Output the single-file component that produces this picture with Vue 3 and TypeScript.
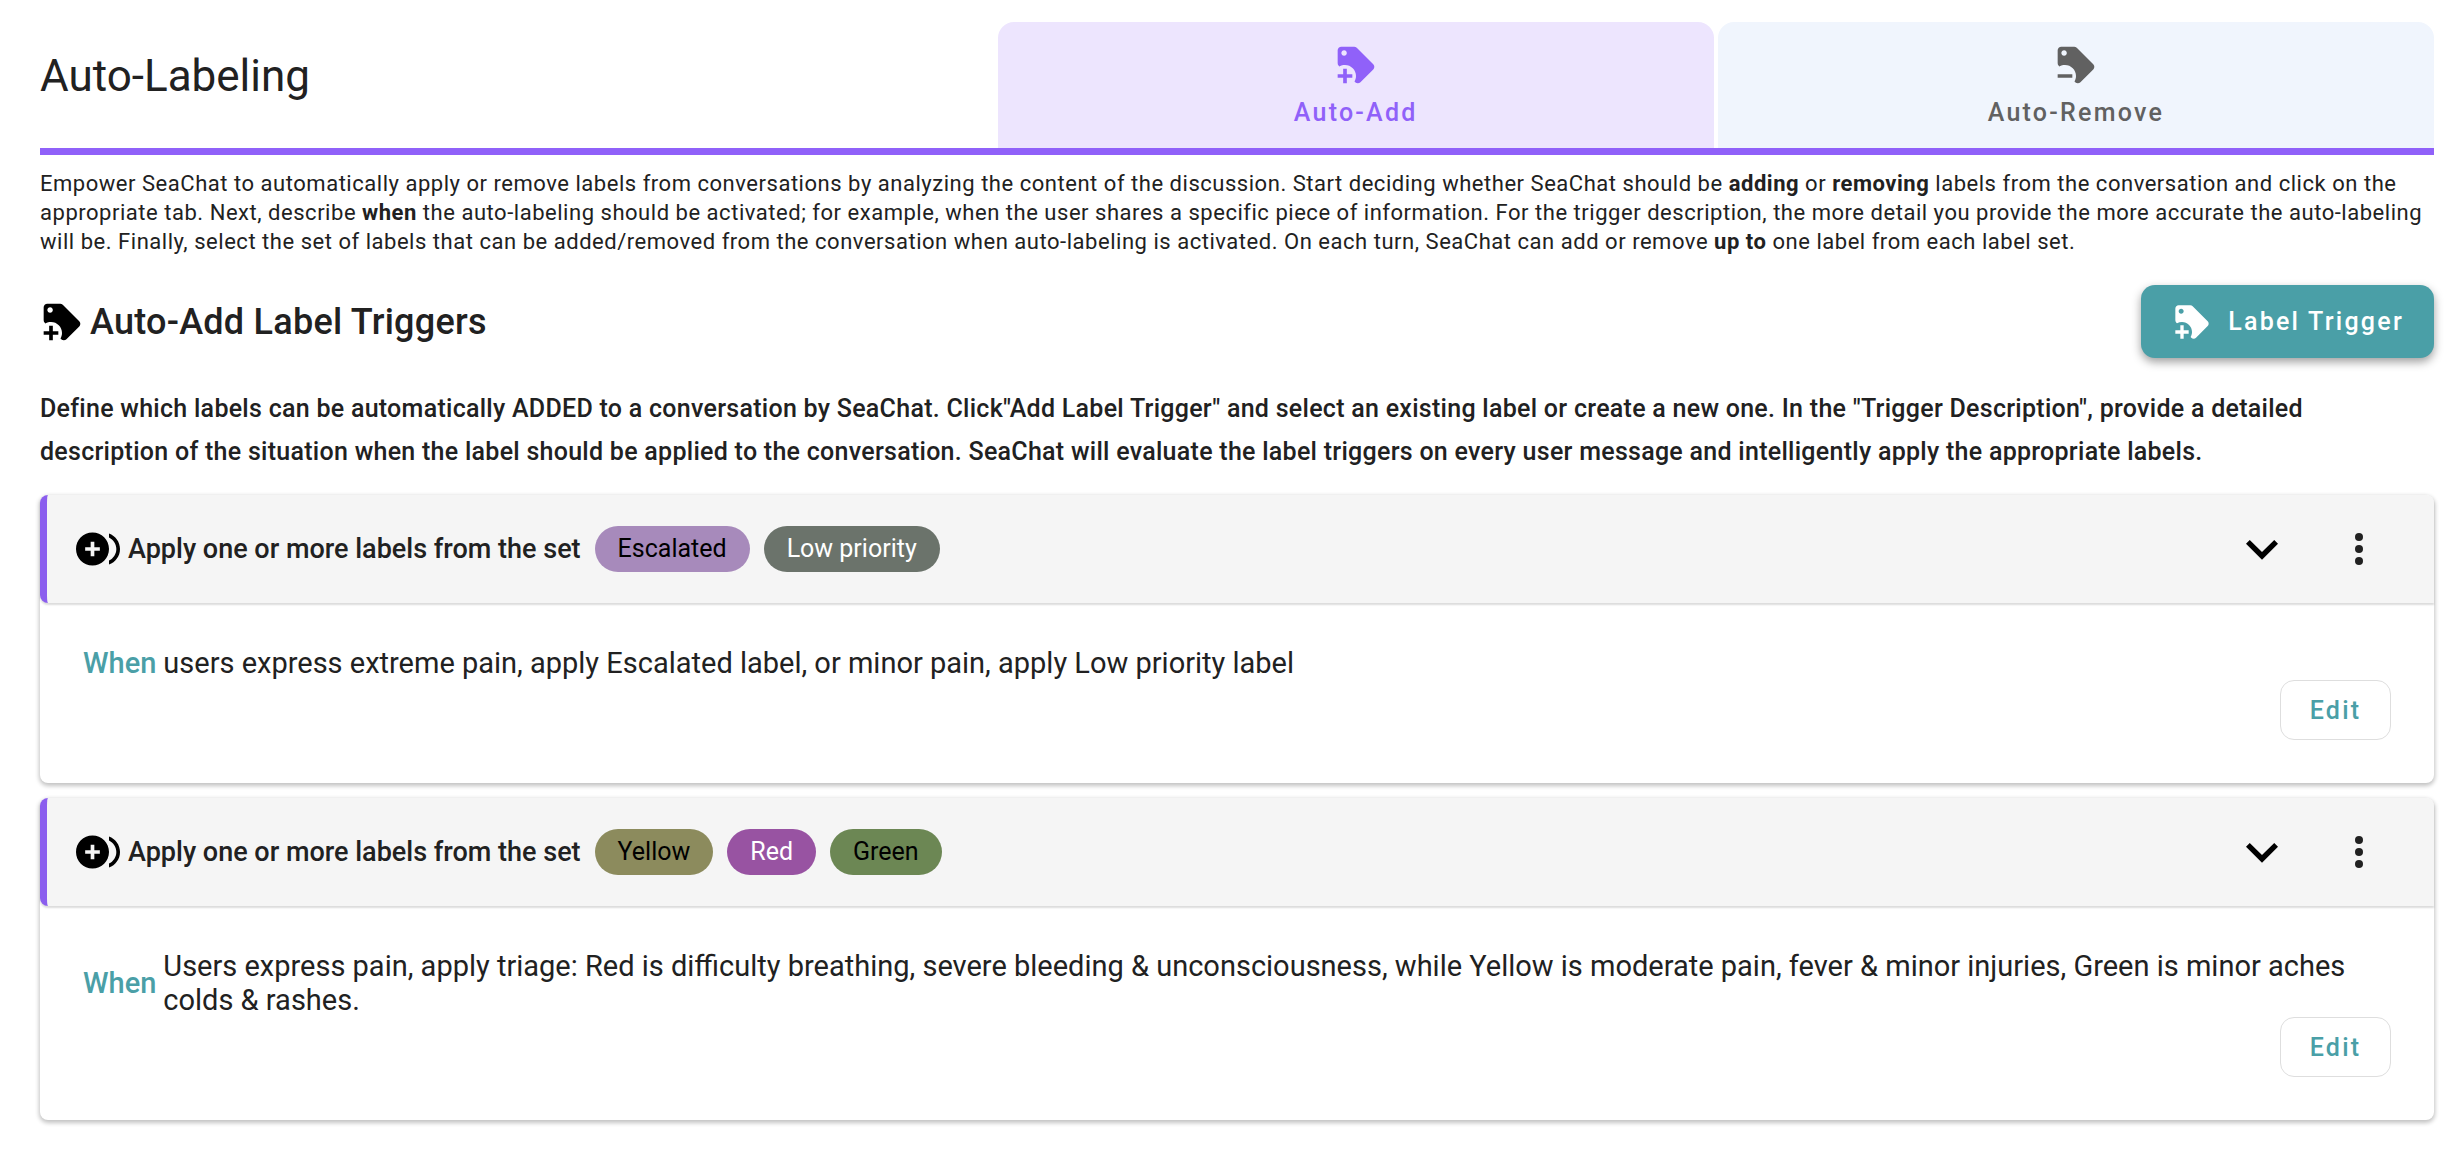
<script setup lang="ts">
import { ref } from 'vue'

interface LabelChip {
  name: string
  background: string
  color: string
}

interface LabelTrigger {
  id: number
  labels: LabelChip[]
  description: string
  open: boolean
}

type Mode = 'add' | 'remove'

const TAG =
  'M21.41 11.58L12.41 2.58C12.04 2.21 11.53 2 11 2H4C2.9 2 2 2.9 2 4V11C2 11.53 2.21 12.04 2.59 12.41L3 12.81C3.9 12.27 4.94 12 6 12C9.31 12 12 14.69 12 18C12 19.06 11.72 20.09 11.18 21L11.58 21.4C11.95 21.78 12.47 22 13 22S14.04 21.79 14.41 21.41L21.41 14.41C21.79 14.04 22 13.53 22 13C22 12.47 21.79 11.96 21.41 11.58M5.5 7C4.67 7 4 6.33 4 5.5S4.67 4 5.5 4 7 4.67 7 5.5 6.33 7 5.5 7'
const TAG_PLUS = TAG + 'M10 19H7V22H5V19H2V17H5V14H7V17H10V19Z'
const TAG_MINUS = TAG + 'M10 19H2V17H10V19Z'
const PLUS_MULTIPLE =
  'M16 8H14V11H11V13H14V16H16V13H19V11H16V8ZM2 12C2 9.21 3.64 6.8 6 5.68V3.5C2.5 4.76 0 8.09 0 12S2.5 19.24 6 20.5V18.32C3.64 17.2 2 14.79 2 12M15 3C10.04 3 6 7.04 6 12S10.04 21 15 21 24 16.96 24 12 19.96 3 15 3'

const mode = ref<Mode>('add')
const tabs: { mode: Mode; title: string; icon: string }[] = [
  { mode: 'add', title: 'Auto-Add', icon: TAG_PLUS },
  { mode: 'remove', title: 'Auto-Remove', icon: TAG_MINUS },
]

const triggers = ref<LabelTrigger[]>([
  {
    id: 1,
    labels: [
      { name: 'Escalated', background: '#a78abb', color: '#000' },
      { name: 'Low priority', background: '#6b736b', color: '#fff' },
    ],
    description:
      'users express extreme pain, apply Escalated label, or minor pain, apply Low priority label',
    open: true,
  },
  {
    id: 2,
    labels: [
      { name: 'Yellow', background: '#8c8b5d', color: '#000' },
      { name: 'Red', background: '#9853a2', color: '#fff' },
      { name: 'Green', background: '#6c8754', color: '#000' },
    ],
    description:
      'Users express pain, apply triage: Red is difficulty breathing, severe bleeding & unconsciousness, while Yellow is moderate pain, fever & minor injuries, Green is minor aches colds & rashes.',
    open: true,
  },
])
</script>

<template>
  <main class="page">
    <header class="top">
      <h1 class="title">Auto-Labeling</h1>
      <div class="tabs" role="tablist" aria-label="Auto-labeling mode">
        <button
          v-for="tab in tabs"
          :key="tab.mode"
          type="button"
          role="tab"
          class="tab"
          :class="{ active: mode === tab.mode }"
          :aria-selected="mode === tab.mode"
          @click="mode = tab.mode"
        >
          <svg class="icon" viewBox="0 0 24 24" aria-hidden="true"><path :d="tab.icon" /></svg>
          <span>{{ tab.title }}</span>
        </button>
      </div>
    </header>

    <p class="intro">
      Empower SeaChat to automatically apply or remove labels from conversations by analyzing the
      content of the discussion. Start deciding whether SeaChat should be <b>adding</b> or
      <b>removing</b> labels from the conversation and click on the appropriate tab. Next, describe
      <b>when</b> the auto-labeling should be activated; for example, when the user shares a
      specific piece of information. For the trigger description, the more detail you provide the
      more accurate the auto-labeling will be. Finally, select the set of labels that can be
      added/removed from the conversation when auto-labeling is activated. On each turn, SeaChat can
      add or remove <b>up to</b> one label from each label set.
    </p>

    <div class="section-head">
      <h2 class="section-title">
        <svg class="icon" viewBox="0 0 24 24" aria-hidden="true"><path :d="TAG_PLUS" /></svg>
        <span>Auto-Add Label Triggers</span>
      </h2>
      <button type="button" class="primary">
        <svg class="icon" viewBox="0 0 24 24" aria-hidden="true"><path :d="TAG_PLUS" /></svg>
        <span>Label Trigger</span>
      </button>
    </div>

    <p class="hint">
      Define which labels can be automatically ADDED to a conversation by SeaChat. Click"Add Label
      Trigger" and select an existing label or create a new one. In the "Trigger Description",
      provide a detailed description of the situation when the label should be applied to the
      conversation. SeaChat will evaluate the label triggers on every user message and intelligently
      apply the appropriate labels.
    </p>

    <section v-for="trigger in triggers" :key="trigger.id" class="card">
      <div class="card-head">
        <svg class="icon" viewBox="0 0 24 24" aria-hidden="true">
          <path transform="matrix(-1 0 0 1 24 0)" fill-rule="evenodd" :d="PLUS_MULTIPLE" />
        </svg>
        <h3 class="card-title">Apply one or more labels from the set</h3>
        <ul class="chips">
          <li
            v-for="label in trigger.labels"
            :key="label.name"
            class="chip"
            :style="{ background: label.background, color: label.color }"
          >
            {{ label.name }}
          </li>
        </ul>
        <button
          type="button"
          class="icon-button"
          aria-label="Toggle details"
          :aria-expanded="trigger.open"
          @click="trigger.open = !trigger.open"
        >
          <svg class="chevron" viewBox="0 0 24 24" aria-hidden="true">
            <path d="M7.41 8.58L12 13.17L16.59 8.58L18 10L12 16L6 10L7.41 8.58Z" />
          </svg>
        </button>
        <button type="button" class="icon-button" aria-label="More actions">
          <svg class="dots" viewBox="0 0 24 24" aria-hidden="true">
            <circle cx="12" cy="6" r="2" />
            <circle cx="12" cy="12" r="2" />
            <circle cx="12" cy="18" r="2" />
          </svg>
        </button>
      </div>
      <div v-if="trigger.open" class="card-body">
        <div class="rule">
          <span class="when">When</span>
          <p class="description">{{ trigger.description }}</p>
        </div>
        <button type="button" class="edit">Edit</button>
      </div>
    </section>
  </main>
</template>

<style>
body {
  margin: 0;
  background: #fff;
}
</style>

<style scoped>
.page {
  box-sizing: border-box;
  padding: 22px 24px 30px 40px;
  color: #212121;
  font-family: Roboto, 'Liberation Sans', sans-serif;
  font-size: 25px;
}

.page * {
  box-sizing: border-box;
}

h1,
h2,
h3,
p,
ul {
  margin: 0;
  padding: 0;
}

button {
  padding: 0;
  border: 0;
  background: none;
  color: inherit;
  font-family: inherit;
  font-size: 25px;
  font-weight: 500;
  letter-spacing: 0.09em;
  cursor: pointer;
}

svg {
  display: block;
  flex: none;
  fill: currentColor;
}

.icon {
  width: 44px;
  height: 44px;
}

.top {
  display: flex;
  border-bottom: 7px solid #9061f9;
}

.title {
  flex: 2;
  padding-top: 28px;
  font-size: 44px;
  font-weight: 400;
  line-height: 52px;
}

.tabs {
  display: flex;
  flex: 3;
  gap: 4px;
}

.tab {
  display: flex;
  flex: 1;
  flex-direction: column;
  align-items: center;
  gap: 12px;
  padding: 21px 0;
  border-radius: 16px 16px 0 0;
  background: #f0f5fd;
  color: #616161;
  line-height: 28px;
}

.tab.active {
  background: #ede5fe;
  color: #9061f9;
}

.intro {
  margin-top: 14px;
  font-size: 22px;
  letter-spacing: 0.024em;
  line-height: 29px;
}

.intro b {
  font-weight: 700;
}

.section-head {
  display: flex;
  align-items: center;
  justify-content: space-between;
  margin-top: 29px;
}

.section-title {
  display: flex;
  align-items: center;
  gap: 6px;
  font-size: 36px;
  font-weight: 500;
  letter-spacing: 0.007em;
}

.section-title .icon,
.card-head .icon {
  color: #000;
}

.primary {
  display: flex;
  align-items: center;
  gap: 16px;
  height: 73px;
  padding: 0 30px 0 31px;
  border-radius: 14px;
  background: #4a9fa7;
  box-shadow: 0 4px 10px rgba(0, 0, 0, 0.38);
  color: #fff;
}

.primary .icon {
  width: 40px;
  height: 40px;
}

.hint {
  margin: 29px 0 22px;
  font-weight: 500;
  letter-spacing: 0.011em;
  line-height: 43px;
}

.card {
  margin-bottom: 15px;
  border-radius: 8px;
  background: #fff;
  box-shadow: 0 2px 4px 1px rgba(0, 0, 0, 0.24);
}

.card-head {
  display: flex;
  align-items: center;
  height: 108px;
  padding: 0 51px 0 29px;
  border-left: 7px solid #8b5eee;
  border-radius: 8px 8px 0 8px;
  background: #f5f5f5;
  box-shadow: 0 2px 2px rgba(0, 0, 0, 0.14);
}

.card-title {
  margin-left: 8px;
  font-size: 27px;
  font-weight: 500;
}

.chips {
  display: flex;
  flex: 1;
  gap: 14px;
  margin-left: 14px;
  list-style: none;
}

.chip {
  padding: 0 23px;
  border-radius: 23px;
  line-height: 46px;
}

.icon-button {
  display: flex;
  align-items: center;
  justify-content: center;
  width: 48px;
  height: 64px;
  margin-left: 49px;
}

.chevron {
  width: 64px;
  height: 64px;
  color: #000;
}

.dots {
  width: 48px;
  height: 48px;
}

.card-body {
  display: flex;
  flex-direction: column;
  align-items: flex-end;
  padding: 43px;
}

.rule {
  display: flex;
  align-items: center;
  gap: 7px;
  width: 100%;
  font-size: 29px;
  line-height: 34px;
}

.when {
  color: #4a9fa7;
  font-weight: 500;
}

.description {
  flex: 1;
}

.edit {
  width: 111px;
  height: 60px;
  border: 1px solid #dedede;
  border-radius: 14px;
  color: #4a9fa7;
}
</style>
